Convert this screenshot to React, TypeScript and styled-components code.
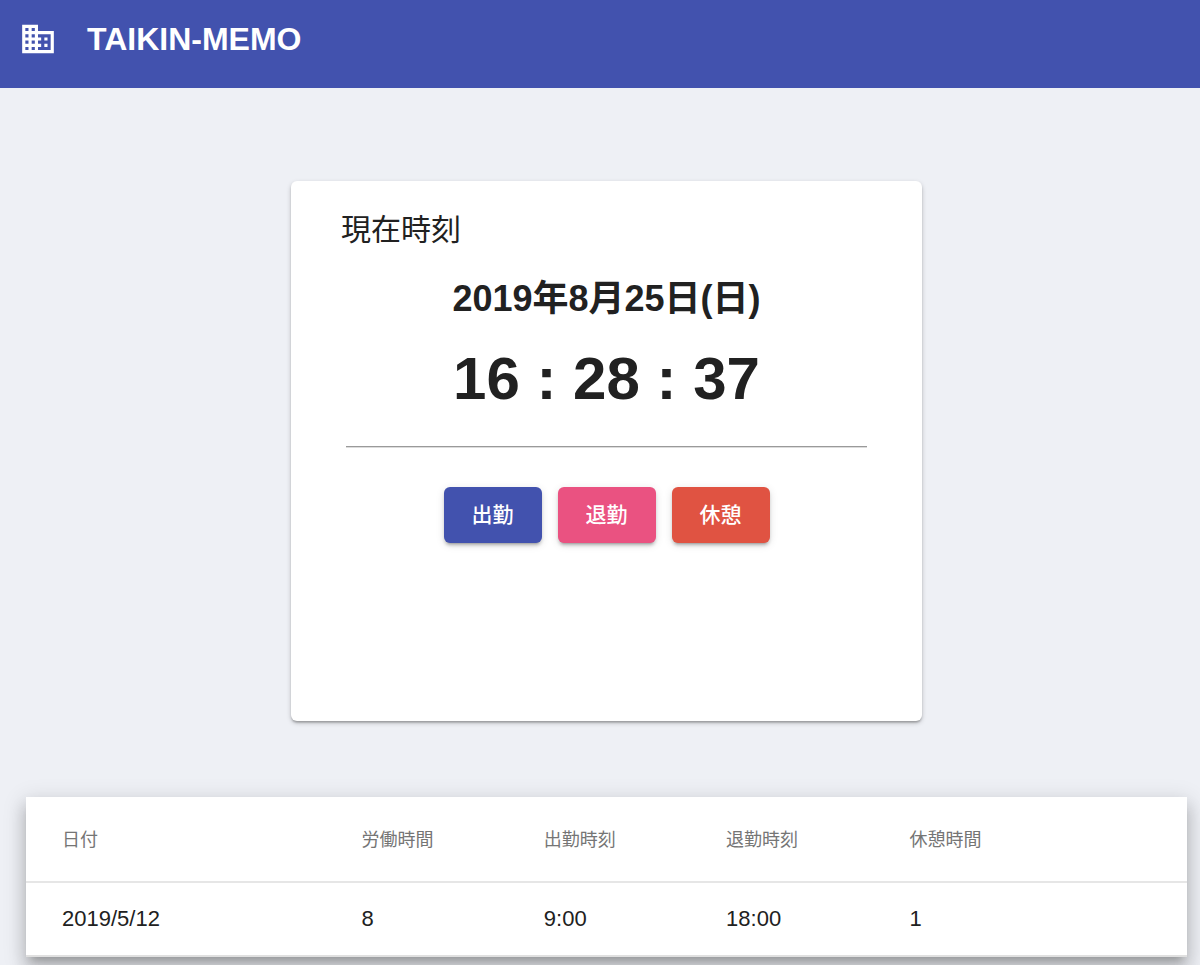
import React from "react";
import styled, { createGlobalStyle } from "styled-components";

const GlobalStyle = createGlobalStyle`
  *, *::before, *::after { box-sizing: border-box; }
  body {
    margin: 0;
    background: #eef0f5;
    color: #212121;
    font-family: "Liberation Sans", "Noto Sans CJK JP", sans-serif;
  }
`;

const AppBar = styled.header`
  display: flex;
  align-items: center;
  gap: 30px;
  padding: 15px 19px 25px;
  background: #4252ae;
  color: #fff;
`;

const LogoIcon = styled.svg`
  width: 38px;
  height: 38px;
  fill: currentColor;
`;

const AppTitle = styled.h1`
  margin: 0;
  font-size: 32px;
  line-height: 48px;
  font-weight: 700;
`;

const Main = styled.main`
  display: flex;
  flex-direction: column;
  align-items: center;
  gap: 76px;
  padding: 93px 13px 8px 26px;
`;

const ClockCard = styled.section`
  width: 100%;
  max-width: 631px;
  min-height: 540px;
  padding: 29px 50px;
  border-radius: 6px;
  background: #fff;
  box-shadow:
    0 2px 5px 0 rgba(0, 0, 0, 0.2),
    0 2px 2px 0 rgba(0, 0, 0, 0.14),
    0 3px 2px -2px rgba(0, 0, 0, 0.12);
`;

const CardTitle = styled.h2`
  margin: 0;
  font-size: 30px;
  line-height: 40px;
  font-weight: 400;
`;

const DateText = styled.p`
  margin: 25px 0 0;
  font-size: 36px;
  line-height: 48px;
  font-weight: 700;
  text-align: center;
`;

const TimeText = styled.p`
  margin: 20px 0 0;
  font-size: 60px;
  line-height: 72px;
  font-weight: 700;
  text-align: center;
`;

const Divider = styled.hr`
  margin: 31px 5px 39px;
  height: 2px;
  border: 0;
  border-top: 1px solid #9a9a9a;
  border-bottom: 1px solid #dcdcdc;
`;

const Actions = styled.div`
  display: flex;
  flex-wrap: wrap;
  justify-content: center;
  gap: 16px;
`;

const ActionButton = styled.button<{ $color: string }>`
  min-width: 98px;
  height: 56px;
  padding: 0 24px;
  border: 0;
  border-radius: 6px;
  background: ${(p) => p.$color};
  color: #fff;
  font-family: inherit;
  font-size: 21px;
  line-height: 36px;
  font-weight: 500;
  cursor: pointer;
  box-shadow:
    0 4px 2px -3px rgba(0, 0, 0, 0.2),
    0 3px 3px 0 rgba(0, 0, 0, 0.14),
    0 2px 8px 0 rgba(0, 0, 0, 0.12);
`;

const TablePaper = styled.section`
  width: 100%;
  background: #fff;
  box-shadow:
    0 8px 8px -5px rgba(0, 0, 0, 0.2),
    0 12px 15px 2px rgba(0, 0, 0, 0.14),
    0 5px 21px 3px rgba(0, 0, 0, 0.12);
`;

const Table = styled.table`
  width: 100%;
  table-layout: fixed;
  border-collapse: separate;
  border-spacing: 0;
`;

const HeadCell = styled.th<{ $width?: string }>`
  width: ${(p) => p.$width ?? "auto"};
  height: 86px;
  padding: 2px 0 0 36px;
  border-bottom: 2px solid #e6e6e6;
  color: #757575;
  font-size: 18px;
  line-height: 24px;
  font-weight: 400;
  text-align: left;
`;

const Cell = styled.td`
  height: 74px;
  padding: 0 0 0 36px;
  border-bottom: 2px solid #e0e0e0;
  font-size: 22px;
  line-height: 30px;
`;

const columns = [
  { label: "日付", width: "25.8%" },
  { label: "労働時間", width: "15.7%" },
  { label: "出勤時刻", width: "15.7%" },
  { label: "退勤時刻", width: "15.8%" },
  { label: "休憩時間" },
];

const records = [["2019/5/12", "8", "9:00", "18:00", "1"]];

const actions = [
  { label: "出勤", color: "#4252ae" },
  { label: "退勤", color: "#ea5281" },
  { label: "休憩", color: "#e05342" },
];

export default function App() {
  return (
    <>
      <GlobalStyle />
      <AppBar>
        <LogoIcon viewBox="0 0 24 24" aria-hidden="true">
          <path d="M12 7V3H2v18h20V7H12zM6 19H4v-2h2v2zm0-4H4v-2h2v2zm0-4H4V9h2v2zm0-4H4V5h2v2zm4 12H8v-2h2v2zm0-4H8v-2h2v2zm0-4H8V9h2v2zm0-4H8V5h2v2zm10 12h-8v-2h2v-2h-2v-2h2v-2h-2V9h8v10zm-2-8h-2v2h2v-2zm0 4h-2v2h2v-2z" />
        </LogoIcon>
        <AppTitle>TAIKIN-MEMO</AppTitle>
      </AppBar>
      <Main>
        <ClockCard>
          <CardTitle>現在時刻</CardTitle>
          <DateText>2019年8月25日(日)</DateText>
          <TimeText>16 : 28 : 37</TimeText>
          <Divider />
          <Actions>
            {actions.map((a) => (
              <ActionButton key={a.label} type="button" $color={a.color}>
                {a.label}
              </ActionButton>
            ))}
          </Actions>
        </ClockCard>
        <TablePaper>
          <Table>
            <thead>
              <tr>
                {columns.map((c) => (
                  <HeadCell key={c.label} scope="col" $width={c.width}>
                    {c.label}
                  </HeadCell>
                ))}
              </tr>
            </thead>
            <tbody>
              {records.map((row) => (
                <tr key={row[0]}>
                  {row.map((value, i) => (
                    <Cell key={columns[i].label}>{value}</Cell>
                  ))}
                </tr>
              ))}
            </tbody>
          </Table>
        </TablePaper>
      </Main>
    </>
  );
}
